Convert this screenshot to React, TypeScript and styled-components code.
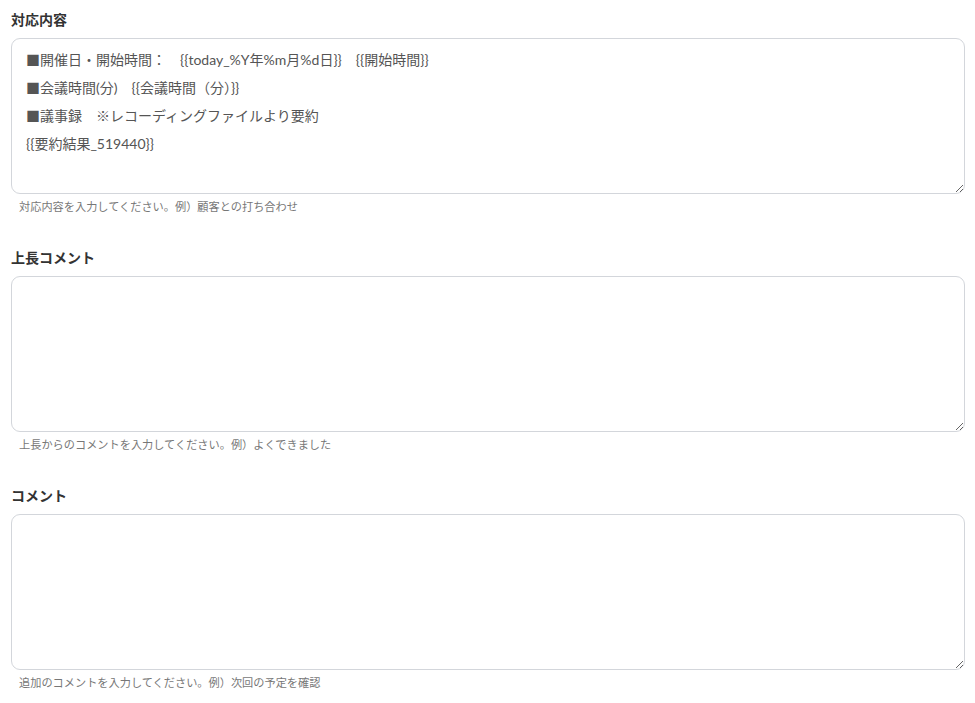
import React from "react"
import styled, { createGlobalStyle } from "styled-components"

const GlobalStyle = createGlobalStyle`
    body {
        margin: 0;
        background: #ffffff;
        font-family: "Noto Sans CJK JP", "Noto Sans", sans-serif;
    }
`

const Page = styled.div`
    padding: 9px 10px 0 11px;
`

const Field = styled.div`
    margin-bottom: 34px;

    &:last-child {
        margin-bottom: 0;
    }
`

const Label = styled.div`
    font-size: 14px;
    font-weight: bold;
    line-height: 20px;
    color: #333333;
    margin-bottom: 9px;
`

const TextArea = styled.textarea`
    display: block;
    box-sizing: border-box;
    width: 100%;
    height: 156px;
    padding: 7px 14px;
    border: 1px solid #d3d6db;
    border-radius: 9px;
    font-family: Lato, "Noto Sans CJK JP", sans-serif;
    font-size: 14px;
    line-height: 28px;
    color: #555555;
    background: #ffffff;
    outline: none;
    resize: vertical;
`

const Help = styled.div`
    margin-top: 5px;
    padding-left: 8px;
    font-size: 11.2px;
    line-height: 14px;
    color: #777777;
`

const fields = [
    {
        label: "対応内容",
        value: "■開催日・開始時間：　{{today_%Y年%m月%d日}}　{{開始時間}}\n■会議時間(分)　{{会議時間（分）}}\n■議事録　※レコーディングファイルより要約\n{{要約結果_519440}}",
        help: "対応内容を入力してください。例）顧客との打ち合わせ",
    },
    {
        label: "上長コメント",
        value: "",
        help: "上長からのコメントを入力してください。例）よくできました",
    },
    {
        label: "コメント",
        value: "",
        help: "追加のコメントを入力してください。例）次回の予定を確認",
    },
]

export default function App() {
    return (
        <>
            <GlobalStyle />
            <Page>
                {fields.map(f => (
                    <Field key={f.label}>
                        <Label>{f.label}</Label>
                        <TextArea defaultValue={f.value} />
                        <Help>{f.help}</Help>
                    </Field>
                ))}
            </Page>
        </>
    )
}
